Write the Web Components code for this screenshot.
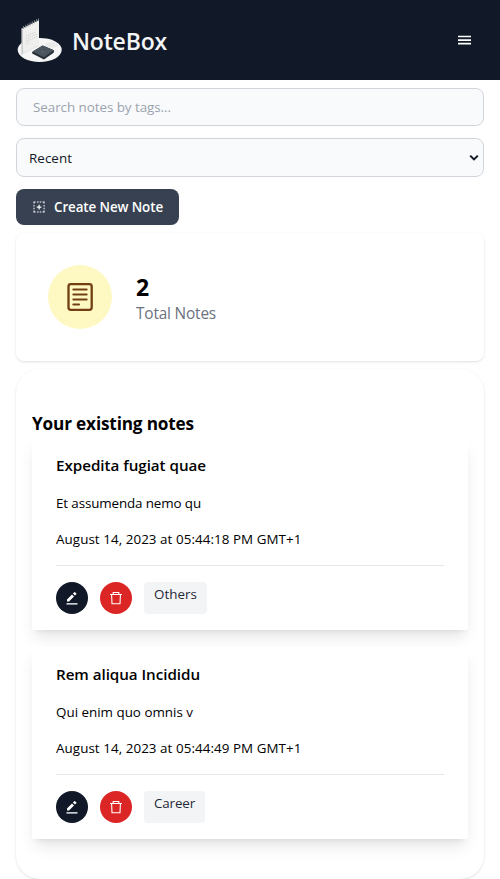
<!DOCTYPE html>
<html lang="en">
<head>
<meta charset="utf-8">
<title>NoteBox</title>
<style>
*{box-sizing:border-box}
body{margin:0;background:#fff;color:#000;font-family:"Open Sans","Noto Sans",sans-serif;height:879px;overflow:hidden}
</style>
</head>
<body>
<note-app></note-app>
<script>
const define = (name, html, ready) => customElements.define(name, class extends HTMLElement {
  connectedCallback() {
    if (this.shadowRoot) return;
    const t = document.createElement('template');
    t.innerHTML = '<style>*{box-sizing:border-box}:host{box-sizing:border-box}</style>' + html;
    this.attachShadow({mode: 'open'}).append(t.content.cloneNode(true));
    if (ready) ready(this, this.shadowRoot);
  }
});

// One line of text whose tracking is set so that it fills the given width.
define('text-run', `<style>:host{display:inline-block;white-space:nowrap;vertical-align:top}</style><slot></slot>`, el => {
  const w = +el.getAttribute('fit');
  const fit = () => {
    el.style.letterSpacing = '0px';
    const natural = el.getBoundingClientRect().width;
    if (natural) el.style.letterSpacing = ((w - natural) / el.textContent.length) + 'px';
  };
  if (w) fit();
});

define('note-logo', `<style>:host{display:block;width:48px;height:48px}svg{display:block}</style>
<svg width="48" height="48" viewBox="0 -1 48 48">
<ellipse cx="23.7" cy="31.9" rx="22" ry="12" fill="#f6f6f6"/>
<ellipse cx="35.5" cy="27" rx="6.5" ry="2.8" fill="#e9e9e9"/>
<path d="M5.4 10.5v26l2-.8V9.5z" fill="#c9cccc"/>
<path d="M7 10L23 2v25.5L7 35.5z" fill="#efefee"/>
<path d="M5.2 36.5L7 35.5l16-8" fill="none" stroke="#dedede" stroke-width=".8"/>
<path d="M7.5 8v3M9.7 6.9v3M11.9 5.7v3M14.1 4.5v3M16.3 3.3v3M18.5 2.2v3M20.7 1.1v3M22.5 .5v2.5" stroke="#848d92" stroke-width=".9"/>
<path d="M10 18.5l9-4.2M10 21l11-5M10 23.5l11-5M10 26l4-1.8" stroke="#c4c7c7" stroke-width=".7" stroke-dasharray="1.5 .7"/>
<path d="M16.2 34l10.4-6.4 11.3 4.6v2.2L28 41.4l-11.8-6z" fill="#262f36"/>
<path d="M16.4 33.5l10.2-5.9 11.3 4.6-10 7z" fill="#4a555d"/>
<path d="M25 33.6l3.2.8" stroke="#65717a" stroke-width=".7"/>
</svg>`);

define('app-header', `<style>
:host{display:flex;height:80px;background:#111827;align-items:center;justify-content:space-between;padding:0 28px 0 16px;color:#f3f4f6}
.brand{display:flex;align-items:center;gap:8px;padding-top:2px}
h1{margin:0;font-size:23px;font-weight:600;line-height:32px}
</style><div class="brand"><note-logo></note-logo><h1><text-run fit="95">NoteBox</text-run></h1></div>
<svg width="16" height="16" viewBox="0 0 16 16"><path d="M2 4.5h13M2 8.1h13M2 11.7h13" stroke="#fff" stroke-width="1.7"/></svg>`);

define('search-field', `<style>
:host{display:flex;height:38px;border:1px solid #d1d5db;border-radius:8px;background:#f9fafb;padding:0 16px;align-items:center;font-size:13.4px;line-height:20px;color:#9ca3af}
</style><text-run fit="138">Search notes by tags...</text-run>`);

define('sort-select', `<style>
:host{display:flex;height:39px;border:1px solid #d1d5db;border-radius:8px;background:#f9fafb;padding:1px 4px 0 12px;align-items:center;justify-content:space-between;font-size:13.4px;line-height:20px;color:#111827}
</style><text-run fit="43">Recent</text-run>
<svg width="10" height="8" viewBox="0 0 10 8"><path d="M1.2 1.6L5 5.4l3.8-3.8" fill="none" stroke="#111827" stroke-width="2"/></svg>`);

define('create-button', `<style>
:host{display:flex;width:163px;height:36px;border-radius:8px;background:#374151;color:#fff;align-items:center;padding:0 16px;font-size:13.4px;line-height:20px;font-weight:600}
svg{margin-right:8px;flex:none}
</style><svg width="14" height="14" viewBox="0 0 14 14" fill="#fff"><path d="M1.5 1.5h2v1h-1v1h-1zM5 1.5h1.6v1H5zM7.7 1.5h1.6v1H7.7zM10.6 1.5h2v2h-1v-1h-1zM1.5 10.6h1v1h1v1h-2zM11.6 10.6h1v2h-2v-1h1zM5 11.6h1.6v1H5zM7.7 11.6h1.6v1H7.7zM1.5 5h1v1.6h-1zM1.5 7.7h1v1.6h-1zM11.6 5h1v1.6h-1zM11.6 7.7h1v1.6h-1zM6.5 4.8h1.2v1.7h1.7v1.2H7.7v1.7H6.5V7.7H4.8V6.5h1.7z"/></svg><text-run fit="109">Create New Note</text-run>`);

define('stat-card', `<style>
:host{display:flex;height:128px;border-radius:8px;padding:0 32px;align-items:center;gap:24px;background:#fff;box-shadow:0 1px 3px rgba(0,0,0,.1),0 1px 2px -1px rgba(0,0,0,.1)}
.icon{width:64px;height:64px;border-radius:50%;background:#fef9c3;display:grid;place-items:center}
.value{font-size:23px;font-weight:700;line-height:28px;padding-top:3px}
.label{font-size:15.4px;line-height:24px;color:#6b7280;padding-top:1px;margin-bottom:-1px}
</style><div class="icon"><svg width="32" height="32" viewBox="0 0 32 32" fill="none" stroke="#713f12"><rect x="4.5" y="3.1" width="23.2" height="25.8" rx="2.3" stroke-width="2.3"/><path d="M9.4 8.5h13.2M9.4 13.5h13.2M9.4 18.5h13.2M9.4 23.5h5.6" stroke-width="2.2" stroke-linecap="round"/></svg></div>
<div><div class="value"><text-run fit="13">2</text-run></div><div class="label"><text-run fit="80">Total Notes</text-run></div></div>`);

define('round-button', `<style>
:host{display:grid;place-items:center;width:32px;height:32px;border-radius:50%;background:#111827;color:#fff}
:host([kind=delete]){background:#dc2626}
svg{display:none}
:host([kind=edit]) .edit,:host([kind=delete]) .delete{display:block}
</style>
<svg class="edit" width="14" height="14" viewBox="0 0 14 14" fill="#fff"><path d="M2 8.5v2h2l5-5-2-2zM7.9 2.6l2 2 1.4-1.4a.5.5 0 0 0 0-.8l-1.2-1.2a.5.5 0 0 0-.8 0z"/><path d="M1.5 12h11v1.7h-11z" fill="#c9ccd2"/></svg>
<svg class="delete" width="14" height="14" viewBox="0 0 14 14" fill="none" stroke="#fff" stroke-width="1.1"><path d="M1 3.5h12M4.2 3.2V1.5h5.6v1.7M2.6 3.5l.4 9.2h8l.4-9.2"/></svg>`);

define('tag-chip', `<style>
:host{display:block;height:32px;background:#f3f4f6;color:#1f2937;border-radius:4px;padding:2px 10px;font-size:13.4px;line-height:20px;font-weight:500}
</style><slot></slot>`);

define('note-card', `<style>
:host{display:block;height:192px;background:#fff;border-radius:2px;padding:16px 24px;box-shadow:0 10px 15px -3px rgba(0,0,0,.1),0 4px 6px -4px rgba(0,0,0,.1)}
.title{font-size:15.2px;line-height:22px;height:24px;font-weight:600}
.line{font-size:13.4px;line-height:18px;height:20px;margin-top:16px}
.actions{display:flex;gap:12px;border-top:1px solid #e5e7eb;margin-top:15px;padding-top:16px}
</style><div class="title"><slot name="title"></slot></div><div class="line"><slot name="body"></slot></div><div class="line"><slot name="date"></slot></div>
<div class="actions"><round-button kind="edit"></round-button><round-button kind="delete"></round-button><slot name="tag"></slot></div>`);

define('notes-panel', `<style>
:host{display:block;height:510px;border-radius:24px;padding:41px 16px 0;background:#fff;box-shadow:0 1px 3px rgba(0,0,0,.1),0 1px 2px -1px rgba(0,0,0,.1)}
h2{margin:0;font-size:17.2px;line-height:27px;height:28px;font-weight:700}
.list{display:flex;flex-direction:column;gap:17px}
</style><h2><text-run fit="162">Your existing notes</text-run></h2><div class="list"><slot></slot></div>`);

define('note-app', `<style>
:host{display:block}
main{padding:8px 16px 0;display:flex;flex-direction:column}
sort-select,create-button{margin-top:12px}
stat-card,notes-panel{margin-top:8px}
</style><app-header></app-header><main>
<search-field></search-field><sort-select></sort-select><create-button></create-button><stat-card></stat-card>
<notes-panel>
<note-card><text-run slot="title" fit="150">Expedita fugiat quae</text-run><text-run slot="body" fit="145">Et assumenda nemo qu</text-run><text-run slot="date" fit="245.5">August 14, 2023 at 05:44:18 PM GMT+1</text-run><tag-chip slot="tag"><text-run fit="43">Others</text-run></tag-chip></note-card>
<note-card><text-run slot="title" fit="144">Rem aliqua Incididu</text-run><text-run slot="body" fit="137">Qui enim quo omnis v</text-run><text-run slot="date" fit="245.5">August 14, 2023 at 05:44:49 PM GMT+1</text-run><tag-chip slot="tag"><text-run fit="41">Career</text-run></tag-chip></note-card>
</notes-panel></main>`);
</script>
</body>
</html>
